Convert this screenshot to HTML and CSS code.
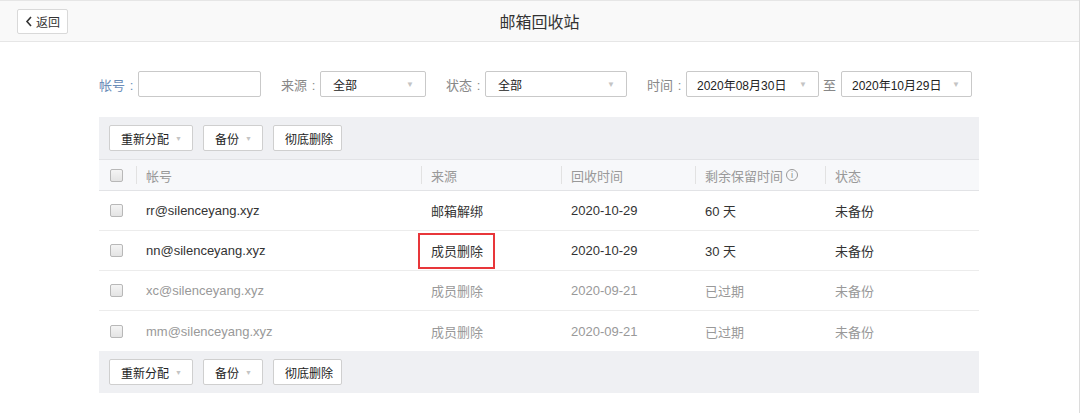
FILE: index.html
```html
<!DOCTYPE html>
<html lang="zh-CN">
<head>
    <meta charset="UTF-8">
    <title>邮箱回收站</title>
    <link rel="stylesheet" href="styles.css">
</head>
<body>
    <!-- 顶部栏 -->
    <div class="topbar">
        <a class="back-btn" href="#">
            <svg class="back-icon" width="8" height="11" viewBox="0 0 8 11"><path d="M6 1 L2 5.5 L6 10" fill="none" stroke="#333" stroke-width="1.6"/></svg>
            返回
        </a>
        <div class="title">邮箱回收站</div>
    </div>

    <div class="main">
        <!-- 筛选条件 -->
        <div class="filter">
            <span class="label label-blue">帐号 <b class="colon">:</b></span>
            <input class="text-input" type="text">
            <span class="label gap">来源 <b class="colon">:</b></span>
            <div class="select w-src">全部<i class="tri">▼</i></div>
            <span class="label gap">状态 <b class="colon">:</b></span>
            <div class="select w-state">全部<i class="tri">▼</i></div>
            <span class="label gap">时间 <b class="colon">:</b></span>
            <div class="select w-date">2020年08月30日<i class="tri">▼</i></div>
            <span class="to">至</span>
            <div class="select w-date2">2020年10月29日<i class="tri">▼</i></div>
        </div>

        <!-- 列表 -->
        <div class="list">
            <div class="toolbar">
                <button class="btn">重新分配<i class="tri">▼</i></button>
                <button class="btn">备份<i class="tri">▼</i></button>
                <button class="btn btn-plain">彻底删除</button>
            </div>
            <table class="grid">
                <colgroup>
                    <col style="width:37px">
                    <col style="width:285px">
                    <col style="width:140px">
                    <col style="width:134px">
                    <col style="width:130px">
                    <col>
                </colgroup>
                <thead>
                    <tr>
                        <th class="chk-cell"><span class="chk"></span></th>
                        <th><span class="th-in">帐号</span></th>
                        <th><span class="th-in">来源</span></th>
                        <th><span class="th-in">回收时间</span></th>
                        <th><span class="th-in">剩余保留时间 <i class="info">i</i></span></th>
                        <th><span class="th-in">状态</span></th>
                    </tr>
                </thead>
                <tbody>
                    <tr>
                        <td class="chk-cell"><span class="chk"></span></td>
                        <td>rr@silenceyang.xyz</td>
                        <td>邮箱解绑</td>
                        <td>2020-10-29</td>
                        <td>60 天</td>
                        <td>未备份</td>
                    </tr>
                    <tr>
                        <td class="chk-cell"><span class="chk"></span></td>
                        <td>nn@silenceyang.xyz</td>
                        <td><span class="mark">成员删除</span></td>
                        <td>2020-10-29</td>
                        <td>30 天</td>
                        <td>未备份</td>
                    </tr>
                    <tr class="expired">
                        <td class="chk-cell"><span class="chk"></span></td>
                        <td>xc@silenceyang.xyz</td>
                        <td>成员删除</td>
                        <td>2020-09-21</td>
                        <td>已过期</td>
                        <td>未备份</td>
                    </tr>
                    <tr class="expired">
                        <td class="chk-cell"><span class="chk"></span></td>
                        <td>mm@silenceyang.xyz</td>
                        <td>成员删除</td>
                        <td>2020-09-21</td>
                        <td>已过期</td>
                        <td>未备份</td>
                    </tr>
                </tbody>
            </table>
            <div class="toolbar">
                <button class="btn">重新分配<i class="tri">▼</i></button>
                <button class="btn">备份<i class="tri">▼</i></button>
                <button class="btn btn-plain">彻底删除</button>
            </div>
        </div>
    </div>
</body>
</html>
```

FILE: styles.css
```css
body{
    margin: 0;
    height: 413px;
    border-right: 1px solid #dcdcdc;
    background: #fff;
    font-family: "Liberation Sans", "Noto Sans CJK SC", sans-serif;
    font-size: 13px;
    color: #333;
}

/* 顶部栏 */
.topbar{
    height: 40px;
    border-top: 1px solid #e6e6e6;
    border-bottom: 1px solid #e6e6e6;
    background: #f9f9f9;
    display: flex;
    align-items: center;
    padding-left: 17px;
}

.back-btn{
    display: flex;
    align-items: center;
    gap: 3px;
    width: 51px;
    height: 25px;
    box-sizing: border-box;
    padding-left: 7px;
    border: 1px solid #d9d9d9;
    border-radius: 2px;
    background: #fff;
    color: #333;
    text-decoration: none;
    font-size: 12px;
}

.title{
    flex: 1;
    text-align: center;
    font-size: 16px;
    color: #333;
    padding-right: 68px;
}

/* 主体 */
.main{
    width: 880px;
    margin: 29px 0 0 99px;
}

.filter{
    display: flex;
    align-items: center;
    height: 26px;
}

.label{
    color: #888;
    white-space: nowrap;
    width: 39px;
    flex: none;
}

.colon{
    font-weight: normal;
    margin-left: 1px;
}

.label-blue{
    color: #6b8db8;
}

.gap{
    margin-left: 20px;
}

.to{
    color: #888;
    width: 13px;
    margin: 0 5px 0 4px;
}

.text-input{
    width: 123px;
    height: 26px;
    box-sizing: border-box;
    border: 1px solid #c9c9c9;
    border-radius: 2px;
    padding: 0 8px;
    margin: 0;
}

.select{
    height: 26px;
    box-sizing: border-box;
    border: 1px solid #c9c9c9;
    border-radius: 2px;
    display: flex;
    align-items: center;
    justify-content: space-between;
    padding: 0 11px 0 12px;
    color: #222;
    font-size: 12px;
    flex: none;
}

.w-src{ width: 106px; }
.w-state{ width: 142px; }
.w-date{ width: 133px; padding-left: 10px; }
.w-date2{ width: 131px; padding-left: 10px; }

.tri{
    font-style: normal;
    font-size: 8px;
    color: #c4c4c4;
}

/* 列表 */
.list{
    margin-top: 20px;
}

.toolbar{
    height: 42px;
    background: #eff0f3;
    display: flex;
    align-items: center;
    gap: 10px;
    padding-left: 10px;
}

.btn{
    height: 26px;
    border: 1px solid #cfcfcf;
    border-radius: 2px;
    background: #fff;
    font-family: inherit;
    font-size: 12px;
    color: #222;
    padding: 0 10px 0 11px;
    display: flex;
    align-items: center;
    gap: 6px;
}

.btn-plain{
    padding-right: 8px;
}

.btn .tri{
    font-size: 7px;
}

.grid{
    width: 880px;
    table-layout: fixed;
    border-collapse: collapse;
}

.grid th{
    height: 30px;
    background: #f7f8fa;
    border-top: 1px solid #e2e3e6;
    border-bottom: 1px solid #e2e3e6;
    font-weight: normal;
    text-align: left;
    color: #999;
    padding: 0;
}

.th-in{
    display: flex;
    align-items: center;
    gap: 3px;
    border-left: 1px solid #e2e2e2;
    padding-left: 9px;
    height: 18px;
}

.info{
    width: 12px;
    height: 12px;
    box-sizing: border-box;
    border: 1px solid #999;
    border-radius: 50%;
    font-style: normal;
    font-size: 9px;
    line-height: 10px;
    text-align: center;
    color: #888;
}

.grid td{
    height: 39px;
    border-bottom: 1px solid #ececec;
    padding: 0 0 0 10px;
    white-space: nowrap;
}

.grid tbody tr:last-child td{
    border-bottom: none;
    height: 40px;
}

.grid .chk-cell{
    padding-left: 11px;
}

.chk{
    display: block;
    width: 13px;
    height: 13px;
    box-sizing: border-box;
    border: 1px solid #b8b8b8;
    border-radius: 2px;
    background: linear-gradient(#f4f4f4, #e4e4e4);
}

.expired td{
    color: #999;
}

.mark{
    display: inline-block;
    border: 2px solid #e8363a;
    padding: 6px 10px 7px 11px;
    margin-left: -13px;
}
```
